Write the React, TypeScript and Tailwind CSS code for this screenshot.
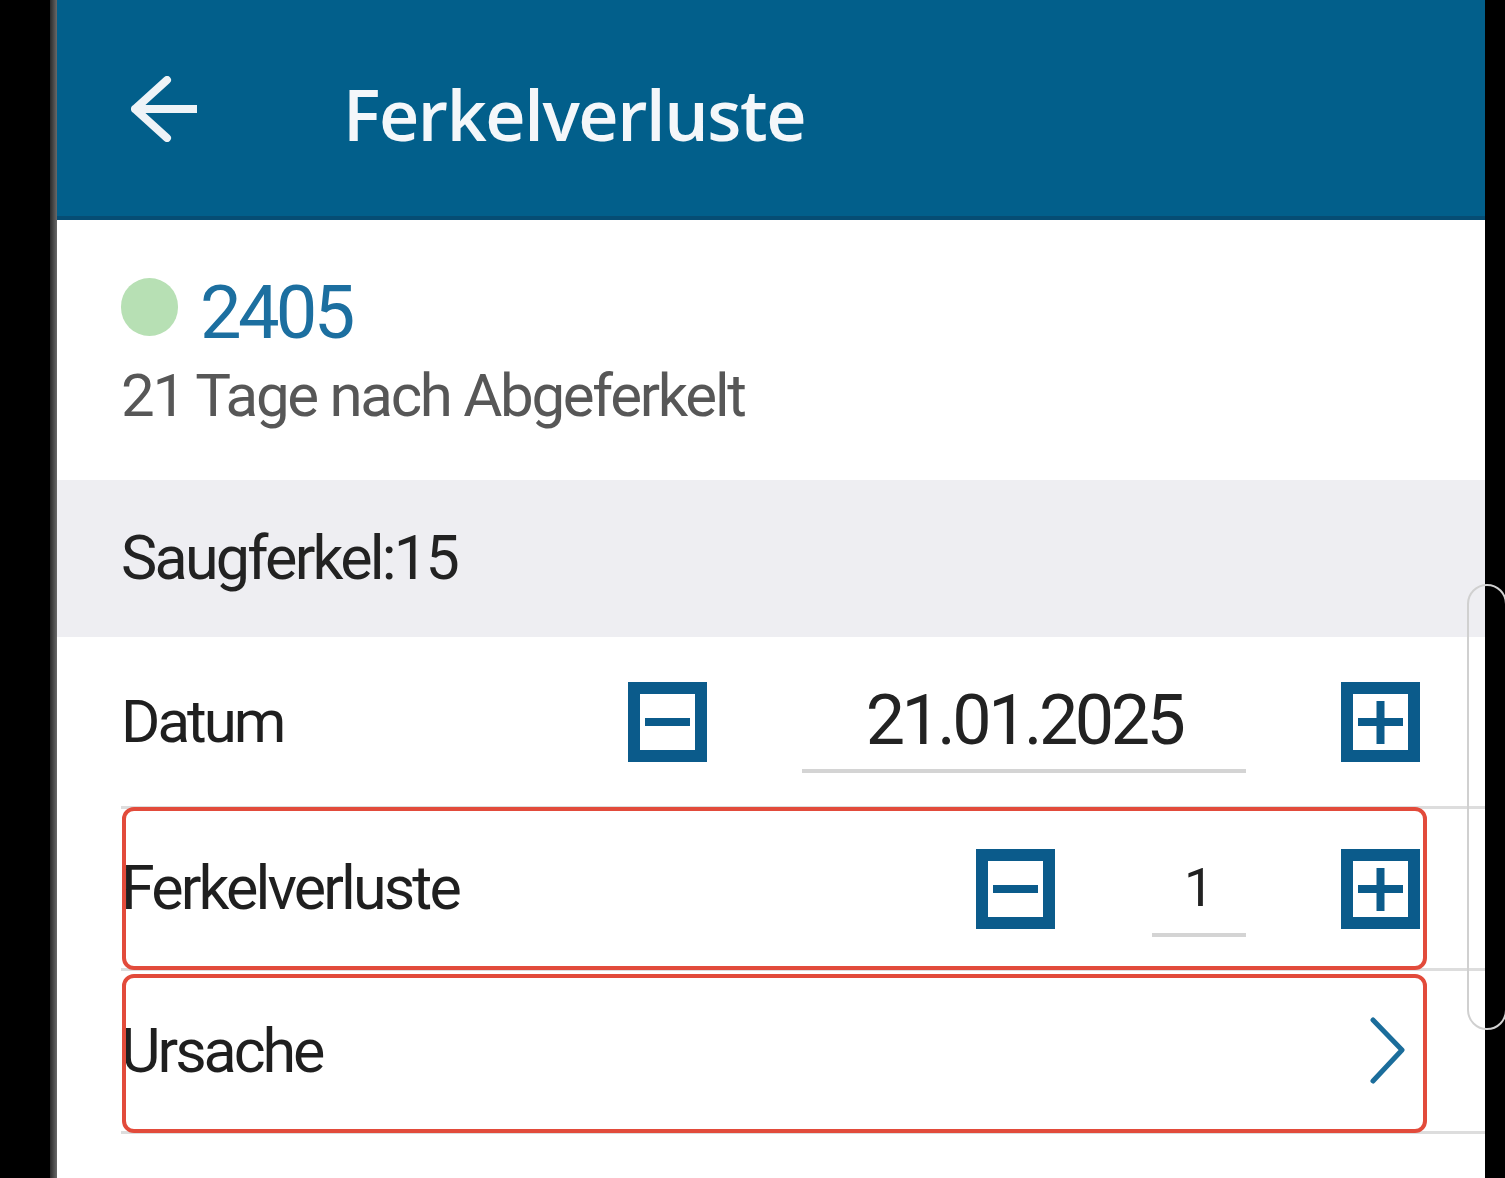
import { ReactNode } from "react";

const BLUE = "#0b5b8b";

function BoxButton({ plus }: { plus?: boolean }) {
  return (
    <svg width="79" height="80" viewBox="0 0 79 80" className="shrink-0">
      <rect x="6" y="6" width="67" height="68" fill="#fff" stroke={BLUE} strokeWidth="12" />
      <line x1="17" y1="40" x2="62" y2="40" stroke={BLUE} strokeWidth="8" />
      {plus && <line x1="39.5" y1="19" x2="39.5" y2="62" stroke={BLUE} strokeWidth="8" />}
    </svg>
  );
}

function Row({ children, className = "", frame }: { children: ReactNode; className?: string; frame?: string }) {
  return (
    <div className={`relative ml-[64px] flex items-center border-b-[3px] border-[#dddddd] pr-[65px] ${className}`}>
      {children}
      {frame && <div className={`pointer-events-none absolute left-[1px] right-[58px] rounded-[12px] border-[4px] border-[#e24b3b] ${frame}`} />}
    </div>
  );
}

export default function App() {
  return (
    <div className="flex h-[1178px] w-[1505px] overflow-hidden bg-black font-['Roboto',sans-serif]">
      <div className="w-[50px] shrink-0 bg-black" />
      <div className="w-[7px] shrink-0 bg-gradient-to-r from-[#2a2a2a] to-[#6a6a6a]" />

      <main className="relative flex w-[1428px] shrink-0 flex-col bg-white">
        {/* toolbar */}
        <header className="flex h-[220px] shrink-0 items-start border-b-4 border-[#064d74] bg-[#025f8b]">
          <svg width="66" height="66" viewBox="0 0 66 66" className="ml-[74px] mt-[76px] shrink-0">
            <path d="M4 33 H66 M36 4 L4 33 L36 62" fill="none" stroke="#eef3f7" strokeWidth="8" strokeLinecap="round" strokeLinejoin="round" />
          </svg>
          <h1 className="ml-[146px] mt-[79px] font-['Open_Sans',sans-serif] text-[70px] font-semibold leading-[70px] tracking-[-0.02em] text-[#f4f7fa]">
            Ferkelverluste
          </h1>
        </header>

        {/* sow info */}
        <section className="h-[260px] shrink-0 pl-[64px] pt-[56px]">
          <div className="flex h-[74px] items-center gap-[22px]">
            <span className="mt-[-12px] h-[58px] w-[57px] shrink-0 rounded-full bg-[#b7e0b4]" />
            <span className="text-[74px] leading-none tracking-[-0.05em] text-[#1c6fa0]">2405</span>
          </div>
          <p className="mt-[16px] text-[60px] leading-[60px] tracking-[-0.038em] text-[#575757]">21 Tage nach Abgeferkelt</p>
        </section>

        <div className="flex h-[157px] shrink-0 items-center bg-[#eeeef2] pl-[64px]">
          <span className="text-[61px] leading-none tracking-[-0.045em] text-[#222]">Saugferkel:15</span>
        </div>

        <Row className="h-[172px]">
          <span className="flex-1 text-[60px] leading-none tracking-[-0.05em] text-[#1f1f1f]">Datum</span>
          <BoxButton />
          <div className="mx-[95px] flex h-[102px] w-[444px] items-center justify-center border-b-4 border-[#d4d4d4]">
            <span className="text-[70px] leading-none tracking-[-0.05em] text-[#222]">21.01.2025</span>
          </div>
          <BoxButton plus />
        </Row>

        <Row className="h-[162px]" frame="top-[-2px] bottom-[-2px]">
          <span className="flex-1 text-[61px] leading-none tracking-[-0.047em] text-[#1f1f1f]">Ferkelverluste</span>
          <BoxButton />
          <div className="ml-[97px] mr-[95px] flex h-[96px] w-[94px] items-center justify-center border-b-4 border-[#d4d4d4]">
            <span className="mt-[4px] text-[53px] leading-none text-[#222]">1</span>
          </div>
          <BoxButton plus />
        </Row>

        <Row className="h-[163px]" frame="top-[3px] bottom-[-2px]">
          <span className="flex-1 text-[61px] leading-none tracking-[-0.05em] text-[#1f1f1f]">Ursache</span>
          <svg width="38" height="68" viewBox="0 0 38 68" className="mr-[13px] shrink-0">
            <path d="M4 3 L33 33 L4 64" fill="none" stroke="#1b6d9b" strokeWidth="5" strokeLinecap="round" strokeLinejoin="round" />
          </svg>
        </Row>

        {/* scroll indicator */}
        <div className="pointer-events-none absolute left-[1410px] top-[584px] h-[446px] w-[40px] rounded-[20px] border-2 border-[#d0d0d0]" />
      </main>

      <div className="w-[20px] shrink-0 bg-black" />
    </div>
  );
}
